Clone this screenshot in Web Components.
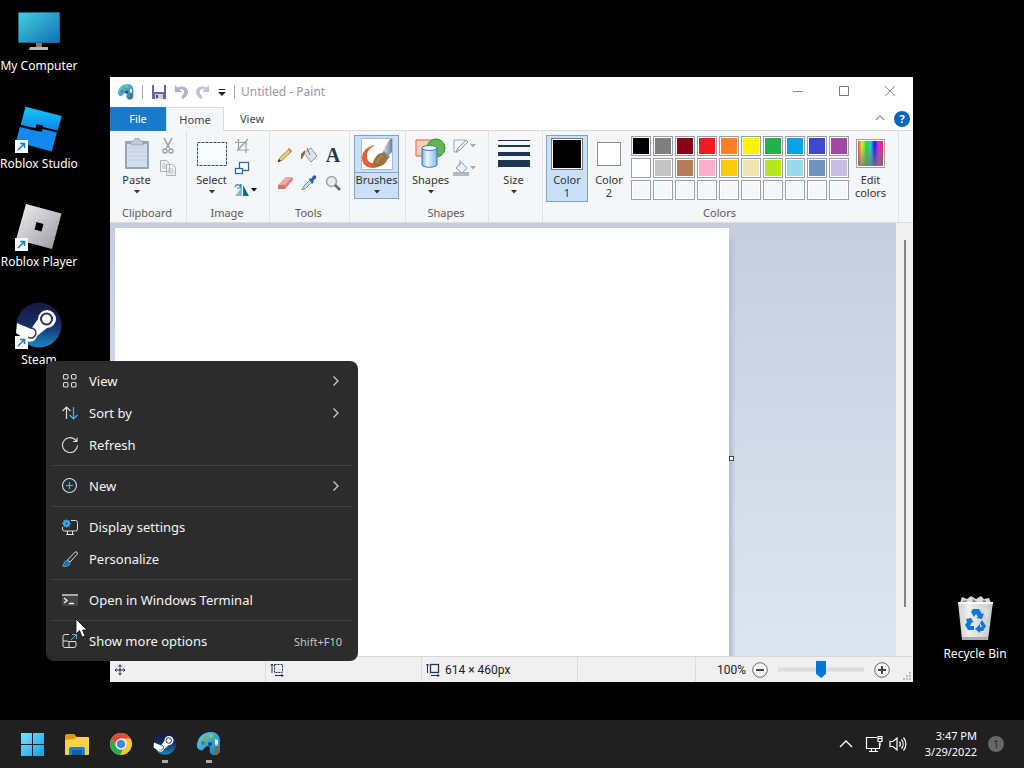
<!DOCTYPE html>
<html lang="en">
<head>
<meta charset="UTF-8">
<meta name="viewport" content="width=device-width, initial-scale=1">
<title>Desktop</title>
<style>
  html, body { height: 100%; }
  body {
    margin: 0;
    background: #000;
    font-family: "Noto Sans", "Open Sans", sans-serif;
    font-size: 11px;
    overflow: hidden;
  }
</style>
</head>
<body>
<desktop-shell></desktop-shell>

<script>
const ICONS = {
  // desktop
  monitor: ['0 0 48 48', `
    <defs><linearGradient id="g" x1="0" y1="0" x2="1" y2="1"><stop offset="0" stop-color="#3fd0de"/><stop offset="1" stop-color="#1470b4"/></linearGradient></defs>
    <rect x="3" y="4" width="42" height="31" rx="1" fill="#1a6793"/><rect x="4" y="5" width="40" height="29" fill="url(#g)"/>
    <path d="M21 35h6v5h-6z" fill="#7c7c7c"/><path d="M15 39h18v3H14z" fill="#b9b9b9"/>`],
  studio: ['0 0 48 48', `
    <defs><linearGradient id="g" x1="0" y1="0" x2="0" y2="1"><stop offset="0" stop-color="#12c8fa"/><stop offset="1" stop-color="#0d86e6"/></linearGradient></defs>
    <path d="M10.500 .7L46.700 10l-4 14.400-15-3.400.2-1.500-6.700-1.300-.7 4L5.700 18.800z" fill="url(#g)"/>
    <path d="M4.800 21L20.300 24.800l6.400 1 1-2.800 14.200 3.600L36.700 45.500 1 35.700z" fill="#1289ef"/>`],
  player: ['0 0 48 48', `
    <defs><linearGradient id="g" x1="0" y1="0" x2="1" y2="1"><stop offset="0" stop-color="#f3f3f4"/><stop offset="1" stop-color="#96989d"/></linearGradient></defs>
    <path fill-rule="evenodd" d="M11 0l35.500 9.500-9.500 35.500-36-9.500zM21.500 18l-2 7.500 7 2 2-7.500z" fill="url(#g)"/>`],
  steam: ['0 0 48 48', `
    <defs><linearGradient id="g" x1="0" y1="0" x2="0" y2="1"><stop offset="0" stop-color="#15183f"/><stop offset=".5" stop-color="#152f66"/><stop offset="1" stop-color="#1a87c4"/></linearGradient></defs>
    <circle cx="24" cy="23" r="22.500" fill="url(#g)"/>
    <path d="M2 21l14 6 7-10a9 9 0 1 1 9 9l-10 8a7 7 0 0 1-13 2l-8-5z" fill="#fff"/>
    <circle cx="31.500" cy="17" r="5.500" fill="#fff" stroke="#27334c" stroke-width="2"/>
    <path d="M13 35a5 5 0 1 0 3-9" fill="none" stroke="#27334c" stroke-width="1.500"/>`],
  bin: ['0 0 48 48', `
    <defs><linearGradient id="g" x1="0" y1="0" x2="1" y2="0"><stop offset="0" stop-color="#c9cccf"/><stop offset=".3" stop-color="#efefef"/><stop offset="1" stop-color="#c4c6c9"/></linearGradient></defs>
    <path d="M9 7l2-6 5 2 4-3 5 3 5-3 3 3 5-1 2 5z" fill="#d7d9db"/><path d="M11 5l5-1-2 4zM22 3l4 3-5 1zM33 3l3 4-6 1z" fill="#85898e"/>
    <path d="M7 6h35l-5 38H11z" fill="url(#g)"/><path d="M7 6h35v2H7z" fill="#fff"/><path d="M11 41h26l-1 3H11z" fill="#a9abad"/>
    <path d="M9 12l6 10-4 8zM30 10l9 4-3 10z" fill="#dcdee0"/>
    <g fill="#1476d3"><path d="M20 16l2-3h6l3 5 2-1-2 6-6-1 2-1-2-3-2 3z"/><path d="M15 23l5-1 3 5-2-1-2 4h4v4h-6l-3-5 2-3z"/><path d="M31 24l4 6-3 5h-3v2l-5-4 5-5v3h2l-2-4z"/></g>`],
  // taskbar
  start: ['0 0 24 24', `
    <defs><linearGradient id="g" x1="0" y1="0" x2="24" y2="24" gradientUnits="userSpaceOnUse"><stop offset="0" stop-color="#7fe2ff"/><stop offset="1" stop-color="#169be6"/></linearGradient></defs>
    <path d="M0 1h11v11H0zM12 1h11v11H12zM0 13h11v11H0zM12 13h11v11H12z" fill="url(#g)"/>`],
  folder: ['0 0 24 24', `
    <path d="M0 4a2 2 0 0 1 2-2h7l3 3h11v7H0z" fill="#d99b14"/><path d="M0 8l9-1 3-2h11a1 1 0 0 1 1 1v16a1 1 0 0 1-1 1H1a1 1 0 0 1-1-1z" fill="#fcd04c"/>
    <path d="M4 23v-6a2 2 0 0 1 2-2h12a2 2 0 0 1 2 2v6z" fill="#1783d4"/><path d="M7 18h10v5H7z" fill="#0f5fa8"/>`],
  chrome: ['0 0 24 24', `
    <circle cx="12" cy="12" r="11" fill="#fcc934"/>
    <path d="M2.500 6.500A11 11 0 0 1 21.500 6.500H12A5.500 5.500 0 0 0 7 14z" fill="#e04a3d"/>
    <path d="M2.500 6.500L7.200 14.700A5.500 5.500 0 0 0 14 17l-3 6A11 11 0 0 1 2.500 6.500z" fill="#2da94f"/>
    <circle cx="12" cy="12" r="5.500" fill="#fff"/><circle cx="12" cy="12" r="4.300" fill="#4285f4"/>`],
  paint: ['0 0 24 24', `
    <defs><linearGradient id="g" x1="0" y1="0" x2="1" y2="1"><stop offset="0" stop-color="#65d2ef"/><stop offset="1" stop-color="#0e78ba"/></linearGradient></defs>
    <path d="M0 14C0 6 6 0 14 0c6 0 9 4 9 9v11c-2 4-7 4-9 2-3-3 1-7-3-8-4 0-4 6-8 4-2-1-3-2-3-4z" fill="url(#g)"/>
    <circle cx="6" cy="11" r="2" fill="#8a6a42"/><circle cx="8" cy="6" r="2" fill="#80b932"/><circle cx="14" cy="4" r="2" fill="#9ec83a"/><circle cx="13" cy="12" r="2" fill="#104b6e"/>
    <path d="M18 7l3 1v5h-3z" fill="#f6e7ce"/><path d="M18 12h3v2h-3z" fill="#bbb"/><path d="M18 14h3v7a1.500 1.500 0 0 1-3 1z" fill="#9b5a2d"/>`],
  up: ['0 0 16 16', `<path d="M2 11l6-6 6 6" fill="none" stroke="#fff" stroke-width="1.300"/>`],
  network: ['0 0 18 18', `<g fill="none" stroke="#fff" stroke-width="1.200"><path d="M12 2.500H1.500v11h13V8"/><path d="M4 16.500h9M6.500 14v2M10.500 14v2M13 1.500h4v5h-4zM15 6.500V11"/><path d="M13 3.500h4"/></g>`],
  sound: ['0 0 18 18', `<g fill="none" stroke="#fff" stroke-width="1.200"><path d="M1 6.500h3L8 3v12l-4-3.500H1z"/><path d="M10.500 6.500a4 4 0 0 1 0 5M12.500 4.500a7 7 0 0 1 0 9M14.500 2.500a10 10 0 0 1 0 13"/></g>`],
  // context menu
  grid: ['0 0 16 16', `<g fill="none" stroke="#ddd" stroke-width="1.100"><rect x="1.500" y="1.500" width="4.500" height="4.500" rx="1.300"/><rect x="9.500" y="1.500" width="4.500" height="4.500" rx="1.300"/><rect x="1.500" y="9.500" width="4.500" height="4.500" rx="1.300"/><rect x="9.500" y="9.500" width="4.500" height="4.500" rx="1.300"/></g>`],
  sort: ['0 0 16 16', `<path d="M.5 6l4-4 4 4M4.500 2v12" fill="none" stroke="#ddd" stroke-width="1.200"/><path d="M7.500 10l4 4 4-4M11.500 14V2" fill="none" stroke="#4cb6dc" stroke-width="1.200"/>`],
  refresh: ['0 0 16 16', `<path d="M15.500 8.500A7.500 7.500 0 1 1 13 2.500l2 2M15 .5v4h-4" fill="none" stroke="#ddd" stroke-width="1.100"/>`],
  plus: ['0 0 16 16', `<circle cx="7.500" cy="7.500" r="7" fill="none" stroke="#c5dce5" stroke-width="1.100"/><path d="M7.500 4v7M4 7.500h7" stroke="#5bb8dc" stroke-width="1.100"/>`],
  display: ['0 0 16 16', `<path d="M9 1.500h4.500a2 2 0 0 1 2 2V10a2 2 0 0 1-2 2H2.500a2 2 0 0 1-2-2V8M5.500 12v3M10.500 12v3M4 15.500h8" fill="none" stroke="#ddd"/><path d="M4.500 0l1 1.500 2-.5V3l1.500 1.500L7.500 6v2l-2-.5-1 1.500-1-1.500-2 .5V6L0 4.500 1.500 3V1l2 .5z" fill="#3da7e6"/><circle cx="4.500" cy="4.500" r="1" fill="#19496a"/>`],
  brush: ['0 0 16 16', `<path d="M5.500 9L13 1.200a1.500 1.500 0 0 1 2.200 2L8 11z" fill="none" stroke="#ddd"/><path d="M5.500 9.500c-3-.5-3 3-5 5.500 3 1 8 0 7.500-3.500z" fill="#256d9b" stroke="#4aa9dd"/>`],
  terminal: ['0 0 16 16', `<rect y="2" width="16" height="12" rx="1" fill="#454545"/><path d="M0 2h16v2H0z" fill="#aaa"/><path d="M2 6l3 2.500L2 11M7 11.500h5" fill="none" stroke="#eee" stroke-width="1.400"/>`],
  more: ['0 0 16 16', `<path d="M7 1.500H3a2 2 0 0 0-2 2v9a2 2 0 0 0 2 2h9a2 2 0 0 0 2-2V9M1 8h4a2 2 0 0 1 2 2v4.500M7 8.500h7" fill="none" stroke="#ddd"/><path d="M9 7l5.500-5.500M10 1.500h4.500V6" fill="none" stroke="#4cb6dc"/>`],
  next: ['0 0 16 16', `<path d="M5.500 3.500L10 8l-4.500 4.500" fill="none" stroke="#ccc" stroke-width="1.300"/>`],
  cursor: ['0 0 14 20', `<path d="M1 1v15l3.500-3.500L7 19l3-1-2.500-6H12z" fill="#fff" stroke="#111" stroke-width=".8"/>`],
  // title bar
  save: ['0 0 16 16', `<path d="M1 1h14v14H1z" fill="#74609b"/><path d="M3 1h10v7H3z" fill="#fafaff"/><path d="M4 10h8v5H4z" fill="#d3cce2"/><path d="M5 11h2v3H5z" fill="#59467d"/>`],
  undo: ['0 0 16 16', `<path d="M2 1v7h7L6.500 5.500C9 4.500 12 6 11 9c-.5 1.500-2 3-3 4l2 2c3-2 5-4 5-7 0-5-6-7-10.500-4.500z" fill="#b0b5c9"/>`],
  redo: ['0 0 16 16', `<path d="M14 1v7H7l2.500-2.500C7 4.500 4 6 5 9c.5 1.500 2 3 3 4l-2 2C3 13 1 11 1 8c0-5 6-7 10.500-4.500z" fill="#c0c4d3"/>`],
  quick: ['0 0 8 8', `<path d="M1 1h6v1H1zM0 4h8L4 8z" fill="#222"/>`],
  minimize: ['0 0 12 12', `<path d="M1 5.500h10" stroke="#8b8b8b"/>`],
  maximize: ['0 0 12 12', `<path d="M1.500 .5h9v9h-9z" fill="none" stroke="#777"/>`],
  close: ['0 0 12 12', `<path d="M1 0l10 10M11 0L1 10" stroke="#888"/>`],
  collapse: ['0 0 12 12', `<path d="M2 7l4-4 4 4" fill="none" stroke="#999" stroke-width="1.300"/>`],
  // ribbon
  arrow: ['0 0 6 4', `<path d="M0 0h6L3 3.500z" fill="currentColor"/>`],
  paste: ['0 0 32 32', `<rect x="4" y="3" width="24" height="28" rx="1" fill="#93a5bf"/><rect x="6" y="6" width="20" height="23" fill="#d3deec"/><path d="M7 10h18M7 14h18M7 18h18M7 22h18" stroke="#bccbe0"/><path d="M10 3h3a3 3 0 0 1 6 0h3v4H10z" fill="#c5ccd6" stroke="#8d99aa" stroke-width=".7"/>`],
  cut: ['0 0 16 16', `<path d="M4 0l6 11M12 0L6 11" stroke="#9b9fa6" stroke-width="1.500"/><circle cx="5" cy="13" r="2" fill="none" stroke="#9b9fa6" stroke-width="1.400"/><circle cx="11" cy="13" r="2" fill="none" stroke="#9b9fa6" stroke-width="1.400"/>`],
  copy: ['0 0 16 16', `<g fill="#f2f4f7" stroke="#a9b1bd"><path d="M.5.5h6l3 3v8h-9zM6.500 4.500h6l3 3v8h-9z"/></g><path d="M2 4h4M2 6h4M2 8h4M8 9h5M8 11h6M8 13h6" stroke="#b6bfcb"/>`],
  select: ['0 0 32 32', `<rect x="1.500" y="4.500" width="29" height="23" fill="#f8fbff" stroke="#2c5580" stroke-dasharray="3 1"/>`],
  crop: ['0 0 16 16', `<path d="M4.500 1v11H15M1 4.500h11V15M3 13L14 1" fill="none" stroke="#9b9fa6" stroke-width="1.200"/>`],
  resize: ['0 0 16 16', `<g fill="#fff" stroke="#33659a" stroke-width="1.300"><rect x="5.500" y="2.500" width="9" height="8"/><rect x="1.500" y="8.500" width="7" height="5"/></g>`],
  rotate: ['0 0 16 16', `<path d="M8 14V5L1 14z" fill="#8db8d1"/><path d="M9 3v11h6z" fill="#1c6a93"/><path d="M1 5c1-3 4-3 5-1l1-2v4H3" fill="none" stroke="#3080b0" stroke-width="1.200"/>`],
  pencil: ['0 0 16 16', `<path d="M1 15l2-4.500 8.500-8 2.500 2.500-8.500 8z" fill="#eed070" stroke="#8f7b4f" stroke-width=".8"/><path d="M1 15l1-3 2 2z" fill="#222"/><path d="M11 2l1-1 3 3-1 1z" fill="#c56b62"/>`],
  fill: ['0 0 16 16', `<path d="M3 6l7-5 6 8-6 6z" fill="#dce1ea" stroke="#8e98a6"/><path d="M6 1l3 7" stroke="#6b7380"/><path d="M0 12V7l4-4v3L1 12z" fill="#a35d45"/>`],
  eraser: ['0 0 16 16', `<path d="M1 11l8-9h6l1 3-8 9H1z" fill="#e0807c"/><path d="M1 10l8-8h6l-7 8z" fill="#f0a9a4"/><path d="M1 10h7v4H1z" fill="#dc716c"/>`],
  picker: ['0 0 16 16', `<path d="M1 15l2-4 6-6 2 2-6 6z" fill="#c5e0f3" stroke="#617b93" stroke-width=".8"/><path d="M8 4l1-1 1 1 2-3c2-2 4 0 3 2l-3 3 1 1-2 2z" fill="#2b60ab"/>`],
  magnifier: ['0 0 16 16', `<circle cx="6.500" cy="6.500" r="5" fill="#e8edf1" stroke="#a0a4a8" stroke-width="1.600"/><path d="M10 10l5 5" stroke="#716861" stroke-width="2.500"/>`],
  brushes: ['0 0 32 32', `
    <defs><linearGradient id="g"><stop offset="0" stop-color="#e8eef5"/><stop offset="1" stop-color="#6f7f96"/></linearGradient></defs>
    <path d="M.5.500h31v31H.5z" fill="#fff" stroke="#a5bad4"/>
    <path d="M14 7C7 8 1 13 1 20c0 8 8 12 16 9l3-4c-7 2-14 0-14-6-1-5 3-9 8-12z" fill="#e4602f"/>
    <path d="M21 14L29 1h2v13l-5 5z" fill="url(#g)"/><path d="M20 16l3-3 6 6-3 3z" fill="#7c8791"/>
    <path d="M11 28c1-5 4-12 9-13 4 0 7 4 6 7-2 6-9 8-15 6z" fill="#9a733f"/><path d="M16 25c1-4 3-6 6-7" fill="none" stroke="#c49a60"/>`],
  shapes: ['0 0 32 32', `<defs><linearGradient id="g" x1="0" y1="0" x2="1" y2="0"><stop offset="0" stop-color="#73b3e4"/><stop offset=".35" stop-color="#edf7ff"/><stop offset="1" stop-color="#7ab8e8"/></linearGradient></defs><path d="M1 2h16v16H1z" fill="#f7cfb8" stroke="#df6042"/><circle cx="21" cy="10" r="9" fill="#62b650" stroke="#348934"/><path d="M7 10v17c2 3 13 3 15 0V10z" fill="url(#g)" stroke="#3d77b3"/><ellipse cx="14.500" cy="10" rx="7.500" ry="2.500" fill="#e6f3ff" stroke="#3d77b3"/>`],
  outline: ['0 0 16 16', `<path d="M12 3V2H1v12h4" fill="none" stroke="#a2a8b3"/><path d="M3 14l2-4 8-8 2 2-8 8z" fill="#e7e9ed" stroke="#9297a0"/>`],
  shapefill: ['0 0 16 16', `<path d="M0 12h16v4H0z" fill="#b1b9c7"/><path d="M3 8l5-6 6 6-5 5z" fill="#edf0f4" stroke="#959ead"/><path d="M7 0v6" stroke="#959ead"/>`],
  size: ['0 0 32 32', `<path d="M0 2h32v1H0zM0 7h32v2H0zM0 14h32v4H0zM0 22h32v7H0z" fill="#1d3551"/>`],
  spectrum: ['0 0 32 32', `<defs><linearGradient id="g"><stop offset="0" stop-color="#ee4b4b"/><stop offset=".15" stop-color="#ece43a"/><stop offset=".34" stop-color="#28d838"/><stop offset=".5" stop-color="#20cfd8"/><stop offset=".66" stop-color="#2a20e4"/><stop offset=".84" stop-color="#e02ae0"/><stop offset="1" stop-color="#e62942"/></linearGradient><linearGradient id="h" x1="0" y1="0" x2="0" y2="1"><stop offset=".2" stop-color="#777" stop-opacity="0"/><stop offset="1" stop-color="#777" stop-opacity=".8"/></linearGradient></defs><rect x="1.500" y="1.500" width="28" height="28" fill="#fff" stroke="#a0a0a0"/><path d="M3 3h25v25H3z" fill="url(#g)"/><path d="M3 3h25v25H3z" fill="url(#h)"/>`],
  // status bar
  move: ['0 0 12 12', `<path d="M6 1v10M1 6h10M4.500 2.500L6 1l1.500 1.500M4.500 9.500L6 11l1.500-1.500M2.500 4.500L1 6l1.500 1.500M9.500 4.500L11 6 9.500 7.500" fill="none" stroke="#1c2d4a"/>`],
  selsize: ['0 0 14 14', `<path d="M2 1v9M.5 2.500L2 1l1.500 1.500M5 12.500h8M11.500 11l1.500 1.500-1.500 1.500" fill="none" stroke="#1c2d4a"/><rect x="4.500" y="1.500" width="8" height="8" fill="none" stroke="#1c2d4a" stroke-dasharray="2 1"/>`],
  imgsize: ['0 0 14 14', `<path d="M1.500 1v9M0 2.500L1.500 1 3 2.500M5 12.500h8M11.500 11l1.500 1.500-1.500 1.500" fill="none" stroke="#1c2d4a"/><rect x="4.500" y="1.500" width="8" height="8" fill="none" stroke="#1c3a62" stroke-width="1.300"/>`],
  zoomout: ['0 0 16 16', `<circle cx="8" cy="8" r="7.300" fill="#f7f7f7" stroke="#666"/><path d="M4 8h8" stroke="#444" stroke-width="2"/>`],
  zoomin: ['0 0 16 16', `<circle cx="8" cy="8" r="7.300" fill="#f7f7f7" stroke="#666"/><path d="M4 8h8M8 4v8" stroke="#444" stroke-width="2"/>`],
  grip: ['0 0 8 8', `<path d="M6 0h2v2H6zM3 3h2v2H3zM6 3h2v2H6zM0 6h2v2H0zM3 6h2v2H3zM6 6h2v2H6z" fill="#bbb"/>`]
};

class UiIcon extends HTMLElement {
  connectedCallback() {
    const [box, shape] = ICONS[this.getAttribute('name')];
    const size = this.getAttribute('size') || 16;
    this.attachShadow({ mode: 'open' }).innerHTML = `
      <style>
        :host { display: inline-flex; flex: none; }
        svg { display: block; }
      </style>
      <svg viewBox="${box}" width="${size}" height="${this.getAttribute('tall') || size}" aria-hidden="true">${shape}</svg>`;
  }
}
customElements.define('ui-icon', UiIcon);

class DeskIcon extends HTMLElement {
  connectedCallback() {
    const link = this.hasAttribute('shortcut')
      ? `<svg class="link" viewBox="0 0 13 13" width="13" height="13"><path d="M0 0h13v13H0z" fill="#f5f8fa"/><path d="M3 10l6-6M5 3.500h4.500V8" fill="none" stroke="#237bb5" stroke-width="1.500"/></svg>` : '';
    this.attachShadow({ mode: 'open' }).innerHTML = `
      <style>
        :host { display: block; }
        button {
          display: flex; flex-direction: column; align-items: center; gap: 2px;
          width: 100%; padding: 0; border: 0; background: none;
          color: #fff; font: inherit; font-size: 12px; line-height: 16px;
          white-space: nowrap;
        }
        .art { position: relative; display: block; width: 48px; height: 48px; }
        .link { position: absolute; left: 0; bottom: 1px; }
      </style>
      <button>
        <span class="art"><ui-icon name="${this.getAttribute('icon')}" size="48"></ui-icon>${link}</span>
        <span><slot></slot></span>
      </button>`;
  }
}
customElements.define('desk-icon', DeskIcon);

class RibbonGroup extends HTMLElement {
  connectedCallback() {
    this.attachShadow({ mode: 'open' }).innerHTML = `
      <style>
        :host {
          display: flex; flex-direction: column; box-sizing: border-box;
          padding-top: 4px; border-right: 1px solid #e2e3e4;
        }
        .body { display: flex; align-items: flex-start; height: 70px; padding: 0 4px; }
        :host([tight]) .body { padding: 0 3px; }
        .label { text-align: center; line-height: 16px; color: #5a5a5a; padding-right: 2px; }
      </style>
      <div class="body"><slot></slot></div>
      <div class="label">${this.getAttribute('label') || ''}</div>`;
  }
}
customElements.define('ribbon-group', RibbonGroup);

// Large ribbon button: picture on top, caption and an optional arrow under it
class RibbonButton extends HTMLElement {
  connectedCallback() {
    const icon = this.getAttribute('icon');
    const arrow = this.hasAttribute('arrow') ? '<ui-icon class="arrow" name="arrow" size="6" tall="4"></ui-icon>' : '';
    this.attachShadow({ mode: 'open' }).innerHTML = `
      <style>
        :host { display: block; flex: none; width: 45px; }
        button {
          display: flex; flex-direction: column; align-items: center; box-sizing: border-box;
          width: 100%; min-height: 64px; padding: 0; border: 1px solid transparent;
          background: none; color: #333; font: inherit; line-height: 13px; white-space: nowrap;
        }
        :host([active]) button { background: #c9e0f7; border-color: #7ba4d3; }
        :host([split]) .pic { box-shadow: 0 1px #7ba4d3; }
        .pic { display: flex; align-items: center; justify-content: center; width: 100%; height: 36px; }
        .text { padding: 1px 0 2px; }
        .arrow { margin-top: 2px; }
      </style>
      <button>
        <span class="pic">${icon ? `<ui-icon name="${icon}" size="32"></ui-icon>` : '<slot name="pic"></slot>'}</span>
        <span class="text"><slot></slot></span>
        ${arrow}
      </button>`;
  }
}
customElements.define('ribbon-button', RibbonButton);

class ToolButton extends HTMLElement {
  connectedCallback() {
    const arrow = this.hasAttribute('arrow') ? '<ui-icon name="arrow" size="6" tall="4"></ui-icon>' : '';
    this.attachShadow({ mode: 'open' }).innerHTML = `
      <style>
        :host { display: flex; }
        :host([muted]) { color: #aaa; }
        button {
          display: flex; align-items: center; justify-content: center; gap: 1px;
          flex: 1; min-width: 16px; padding: 0; border: 0; background: none; color: inherit;
          font: bold 20px/22px "Liberation Serif", serif;
        }
      </style>
      <button aria-label="${this.getAttribute('label')}">${this.hasAttribute('icon') ? `<ui-icon name="${this.getAttribute('icon')}"></ui-icon>` : '<slot></slot>'}${arrow}</button>`;
  }
}
customElements.define('tool-button', ToolButton);

class ColorPalette extends HTMLElement {
  connectedCallback() {
    const colors = ['#000000', '#7f7f7f', '#880015', '#ed1c24', '#ff7f27', '#fff200', '#22b14c', '#00a2e8', '#3f48cc', '#a349a4',
      '#ffffff', '#c3c3c3', '#b97a57', '#ffaec9', '#ffc90e', '#efe4b0', '#b5e61d', '#99d9ea', '#7092be', '#c8bfe7'];
    const cells = [...colors, ...Array(10).fill('')].map(c =>
      `<button aria-label="${c || 'empty'}" style="background:${c || '#f5f6f7'}"></button>`).join('');
    this.attachShadow({ mode: 'open' }).innerHTML = `
      <style>
        :host { display: grid; grid-template-columns: repeat(10, 20px); gap: 2px; }
        button { height: 20px; padding: 0; border: 1px solid #9c9fa3; box-shadow: inset 0 0 0 1px #fff; }
      </style>${cells}`;
  }
}
customElements.define('color-palette', ColorPalette);

class PaintTitlebar extends HTMLElement {
  connectedCallback() {
    this.attachShadow({ mode: 'open' }).innerHTML = `
      <style>
        :host { display: flex; align-items: center; height: 30px; padding-left: 8px; color: #999; }
        button { display: flex; align-items: center; justify-content: center; width: 22px; height: 28px; padding: 0; border: 0; background: none; }
        .bar { width: 1px; height: 14px; background: #a5a5a5; }
        .quick { display: flex; align-items: center; padding: 0 4px 0 5px; }
        .quick button:last-child { width: 16px; }
        .bar:first-of-type { margin-left: 8px; }
        .title { flex: 1; padding-left: 6px; font-size: 12px; line-height: 16px; font-weight: 400; margin: 0; }
        .win button { width: 46px; }
        .win { display: flex; }
      </style>
      <ui-icon name="paint"></ui-icon>
      <span class="bar"></span>
      <div class="quick">
        <button aria-label="Save"><ui-icon name="save"></ui-icon></button>
        <button aria-label="Undo"><ui-icon name="undo"></ui-icon></button>
        <button aria-label="Redo"><ui-icon name="redo"></ui-icon></button>
        <button aria-label="Customize"><ui-icon name="quick" size="8"></ui-icon></button>
      </div>
      <span class="bar"></span>
      <h1 class="title">Untitled - Paint</h1>
      <div class="win">
        <button aria-label="Minimize"><ui-icon name="minimize" size="12"></ui-icon></button>
        <button aria-label="Maximize"><ui-icon name="maximize" size="12"></ui-icon></button>
        <button aria-label="Close"><ui-icon name="close" size="12"></ui-icon></button>
      </div>`;
  }
}
customElements.define('paint-titlebar', PaintTitlebar);

class PaintTabs extends HTMLElement {
  connectedCallback() {
    this.attachShadow({ mode: 'open' }).innerHTML = `
      <style>
        :host { display: flex; height: 24px; box-shadow: inset 0 -1px #dadbdc; }
        button { box-sizing: border-box; width: 56px; padding: 0; border: 0; background: none; color: #444; font: inherit; line-height: 16px; }
        .file { background: #1979ca; color: #fff; }
        .home { width: 58px; background: #f5f6f7; border: 1px solid #dadbdc; border-bottom: 0; }
        .end { display: flex; align-items: center; gap: 8px; margin-left: auto; padding-right: 3px; }
        .end button { display: flex; align-items: center; justify-content: center; width: 12px; height: 16px; }
        .end .help { width: 16px; border-radius: 50%; background: #0b64b5; color: #fff; font-weight: 700; line-height: 16px; }
      </style>
      <button class="file">File</button>
      <button class="home">Home</button>
      <button>View</button>
      <div class="end">
        <button aria-label="Collapse"><ui-icon name="collapse" size="12"></ui-icon></button>
        <button class="help">?</button>
      </div>`;
  }
}
customElements.define('paint-tabs', PaintTabs);

class PaintRibbon extends HTMLElement {
  connectedCallback() {
    this.attachShadow({ mode: 'open' }).innerHTML = `
      <style>
        :host { display: flex; background: #f5f6f7; border-bottom: 1px solid #dadbdc; height: 91px; overflow: hidden; }
        .clip { width: 77px; } .image { width: 83px; } .tools { width: 80px; }
        .brushes { width: 56px; } .shapes { width: 83px; } .size { width: 54px; } .colors { width: 356px; }
        .stack { display: grid; grid-auto-rows: 22px; justify-items: start; padding-left: 1px; }
        .grid { display: grid; grid-template: repeat(2, 28px) / repeat(3, 24px); padding-top: 6px; color: #26384c; }
        .chip { box-sizing: border-box; border: 1px solid #8c8c8c; }
        .one { width: 32px; height: 32px; background: #000; border-color: #777; box-shadow: inset 0 0 0 1px #fff; }
        .two { width: 24px; height: 24px; background: #fff; }
        .swatches { margin: 1px 0 0 1px; }
        .c { width: 42px; }
        .narrow { width: 43px; }
      </style>
      <ribbon-group class="clip" label="Clipboard">
        <ribbon-button icon="paste" arrow>Paste</ribbon-button>
        <div class="stack">
          <tool-button icon="cut" label="Cut"></tool-button>
          <tool-button icon="copy" label="Copy"></tool-button>
        </div>
      </ribbon-group>
      <ribbon-group class="image" label="Image" tight>
        <ribbon-button class="narrow" icon="select" arrow>Select</ribbon-button>
        <div class="stack">
          <tool-button icon="crop" label="Crop"></tool-button>
          <tool-button icon="resize" label="Resize"></tool-button>
          <tool-button icon="rotate" label="Rotate" arrow></tool-button>
        </div>
      </ribbon-group>
      <ribbon-group class="tools" label="Tools" tight>
        <div class="grid">
          <tool-button icon="pencil" label="Pencil"></tool-button>
          <tool-button icon="fill" label="Fill"></tool-button>
          <tool-button label="Text">A</tool-button>
          <tool-button icon="eraser" label="Eraser"></tool-button>
          <tool-button icon="picker" label="Color picker"></tool-button>
          <tool-button icon="magnifier" label="Magnifier"></tool-button>
        </div>
      </ribbon-group>
      <ribbon-group class="brushes">
        <ribbon-button icon="brushes" arrow active split>Brushes</ribbon-button>
      </ribbon-group>
      <ribbon-group class="shapes" label="Shapes" tight>
        <ribbon-button class="narrow" icon="shapes" arrow>Shapes</ribbon-button>
        <div class="stack">
          <tool-button icon="outline" label="Outline" arrow muted></tool-button>
          <tool-button icon="shapefill" label="Shape fill" arrow muted></tool-button>
        </div>
      </ribbon-group>
      <ribbon-group class="size" tight>
        <ribbon-button class="narrow" icon="size" arrow>Size</ribbon-button>
      </ribbon-group>
      <ribbon-group class="colors" label="Colors" tight>
        <ribbon-button class="c" active><span class="chip one" slot="pic"></span>Color<br>1</ribbon-button>
        <ribbon-button class="c"><span class="chip two" slot="pic"></span>Color<br>2</ribbon-button>
        <color-palette class="swatches"></color-palette>
        <ribbon-button class="narrow" icon="spectrum">Edit<br>colors</ribbon-button>
      </ribbon-group>`;
  }
}
customElements.define('paint-ribbon', PaintRibbon);

class PaintCanvas extends HTMLElement {
  connectedCallback() {
    this.attachShadow({ mode: 'open' }).innerHTML = `
      <style>
        :host { display: flex; min-height: 0; background: #f0f0f0; }
        .view { flex: 1; min-width: 0; overflow: hidden; padding: 5px 0 0 5px; background: linear-gradient(#c6cede, #dce6f2); }
        .paper { position: relative; width: 614px; height: 460px; background: #fff; box-shadow: 6px 9px 4px -2px #b4c0d4; }
        .handle { position: absolute; left: 100%; top: 50%; width: 3px; height: 3px; margin-top: -2px; border: 1px solid #444; background: #fff; }
        .scroll { display: flex; justify-content: center; width: 17px; padding: 17px 0 49px; box-sizing: border-box; }
        .thumb { width: 2px; background: #858585; }
      </style>
      <div class="view"><div class="paper"><span class="handle"></span></div></div>
      <div class="scroll"><span class="thumb"></span></div>`;
  }
}
customElements.define('paint-canvas', PaintCanvas);

class PaintStatus extends HTMLElement {
  connectedCallback() {
    this.attachShadow({ mode: 'open' }).innerHTML = `
      <style>
        :host { display: flex; height: 26px; box-sizing: border-box; border-top: 1px solid #d7d7d7; background: #f0f0f0; color: #222; font: 12px Roboto, sans-serif; }
        .cell { display: flex; align-items: center; gap: 5px; box-sizing: border-box; width: 156px; padding-left: 4px; border-right: 1px solid #dcdcdc; }
        .rest { flex: 1; }
        .zoom { display: flex; align-items: center; box-sizing: border-box; width: 217px; padding-left: 21px; }
        label { width: 35px; }
        button { display: flex; padding: 0; border: 0; background: none; }
        input { appearance: none; flex: 1; min-width: 0; height: 18px; margin: 0 10px; background: linear-gradient(#d5d5d5, #d5d5d5) center / 100% 1px no-repeat, linear-gradient(#e3e3e3, #e3e3e3) center / 100% 5px no-repeat; }
        input::-webkit-slider-thumb { appearance: none; width: 10px; height: 17px; background: #0078d7; clip-path: polygon(0 0, 100% 0, 100% 75%, 50% 100%, 0 75%); }
        .grip { align-self: flex-end; margin: 0 2px 2px 13px; }
      </style>
      <div class="cell"><ui-icon name="move" size="12"></ui-icon></div>
      <div class="cell"><ui-icon name="selsize" size="14"></ui-icon></div>
      <div class="cell"><ui-icon name="imgsize" size="14"></ui-icon><span>614 × 460px</span></div>
      <div class="cell rest"></div>
      <div class="zoom">
        <label for="zoom">100%</label>
        <button aria-label="Zoom out"><ui-icon name="zoomout"></ui-icon></button>
        <input id="zoom" type="range" min="0" max="100" value="50">
        <button aria-label="Zoom in"><ui-icon name="zoomin"></ui-icon></button>
        <ui-icon class="grip" name="grip" size="8"></ui-icon>
      </div>`;
  }
}
customElements.define('paint-status', PaintStatus);

class PaintWindow extends HTMLElement {
  connectedCallback() {
    this.attachShadow({ mode: 'open' }).innerHTML = `
      <style>
        :host { display: flex; flex-direction: column; background: #fff; overflow: hidden; }
        paint-canvas { flex: 1; }
      </style>
      <paint-titlebar></paint-titlebar>
      <paint-tabs></paint-tabs>
      <paint-ribbon></paint-ribbon>
      <paint-canvas></paint-canvas>
      <paint-status></paint-status>`;
  }
}
customElements.define('paint-window', PaintWindow);

class MenuItem extends HTMLElement {
  connectedCallback() {
    const hint = this.getAttribute('hint');
    this.attachShadow({ mode: 'open' }).innerHTML = `
      <style>
        :host { display: block; }
        button {
          display: flex; align-items: center; gap: 11px; width: 100%; height: 32px;
          padding: 0 14px 0 16px; border: 0; background: none; color: #f5f5f5; font: inherit; text-align: left;
        }
        .text { flex: 1; }
        .hint { color: #c5c5c5; font-size: 11px; padding-right: 2px; }
      </style>
      <button role="menuitem">
        <ui-icon name="${this.getAttribute('icon')}"></ui-icon>
        <span class="text"><slot></slot></span>
        ${hint ? `<span class="hint">${hint}</span>` : ''}
        ${this.hasAttribute('more') ? '<ui-icon name="next"></ui-icon>' : ''}
      </button>`;
  }
}
customElements.define('menu-item', MenuItem);

class ContextMenu extends HTMLElement {
  connectedCallback() {
    this.attachShadow({ mode: 'open' }).innerHTML = `
      <style>
        :host {
          display: block; box-sizing: border-box; padding: 4px 0; border-radius: 8px;
          background: #2c2c2c; color: #fff; font-size: 13px;
        }
        ::slotted(hr) { height: 1px; margin: 4px 6px; border: 0; background: #404040; }
      </style>
      <slot></slot>`;
    this.setAttribute('role', 'menu');
  }
}
customElements.define('context-menu', ContextMenu);

class TaskBar extends HTMLElement {
  connectedCallback() {
    const apps = [['start', 'Start'], ['folder', 'File Explorer'], ['chrome', 'Chrome'], ['steam', 'Steam', 1], ['paint', 'Paint', 1]];
    this.attachShadow({ mode: 'open' }).innerHTML = `
      <style>
        :host { display: flex; align-items: center; height: 48px; padding: 0 20px 0 11px; box-sizing: border-box; background: #202020; color: #fff; }
        button { display: flex; align-items: center; justify-content: center; padding: 0; border: 0; background: none; color: inherit; font: inherit; }
        .apps { display: flex; flex: 1; }
        .apps button { width: 44px; height: 48px; }
        .apps .on { background: radial-gradient(#aaa, #aaa) center 40px / 6px 3px no-repeat; }
        .tray { display: flex; align-items: center; gap: 6px; }
        .up { margin-right: 5px; }
        .clock { display: block; text-align: right; line-height: 16px; padding-left: 12px; }
        .badge { width: 16px; height: 16px; margin-left: 5px; border-radius: 50%; background: #676767; color: #222; font-size: 10px; line-height: 16px; }
      </style>
      <div class="apps">
        ${apps.map(([icon, label, on]) => `<button class="${on ? 'on' : ''}" aria-label="${label}"><ui-icon name="${icon}" size="24"></ui-icon></button>`).join('')}
      </div>
      <div class="tray">
        <button class="up" aria-label="Hidden icons"><ui-icon name="up"></ui-icon></button>
        <button aria-label="Network"><ui-icon name="network" size="18"></ui-icon></button>
        <button aria-label="Sound"><ui-icon name="sound" size="18"></ui-icon></button>
        <button class="clock">3:47 PM<br>3/29/2022</button>
        <button class="badge">1</button>
      </div>`;
  }
}
customElements.define('task-bar', TaskBar);

class DesktopShell extends HTMLElement {
  connectedCallback() {
    this.attachShadow({ mode: 'open' }).innerHTML = `
      <style>
        :host { display: flex; flex-direction: column; min-height: 100vh; }
        main { position: relative; flex: 1; }
        .icons { display: flex; flex-direction: column; gap: 32px; width: 78px; padding-top: 8px; }
        .bin { position: absolute; right: 0; bottom: 58px; width: 98px; }
        paint-window { position: absolute; inset: 77px 111px 38px 110px; }
        context-menu { position: absolute; left: 46px; top: 361px; width: 312px; }
        .cursor { position: absolute; left: 75px; top: 618px; }
      </style>
      <main>
        <div class="icons">
          <desk-icon icon="monitor">My Computer</desk-icon>
          <desk-icon icon="studio" shortcut>Roblox Studio</desk-icon>
          <desk-icon icon="player" shortcut>Roblox Player</desk-icon>
          <desk-icon icon="steam" shortcut>Steam</desk-icon>
        </div>
        <desk-icon class="bin" icon="bin">Recycle Bin</desk-icon>
        <paint-window></paint-window>
        <context-menu>
          <menu-item icon="grid" more>View</menu-item>
          <menu-item icon="sort" more>Sort by</menu-item>
          <menu-item icon="refresh">Refresh</menu-item>
          <hr>
          <menu-item icon="plus" more>New</menu-item>
          <hr>
          <menu-item icon="display">Display settings</menu-item>
          <menu-item icon="brush">Personalize</menu-item>
          <hr>
          <menu-item icon="terminal">Open in Windows Terminal</menu-item>
          <hr>
          <menu-item icon="more" hint="Shift+F10">Show more options</menu-item>
        </context-menu>
        <ui-icon class="cursor" name="cursor" size="14" tall="20"></ui-icon>
      </main>
      <task-bar></task-bar>`;
  }
}
customElements.define('desktop-shell', DesktopShell);
</script>
</body>
</html>
